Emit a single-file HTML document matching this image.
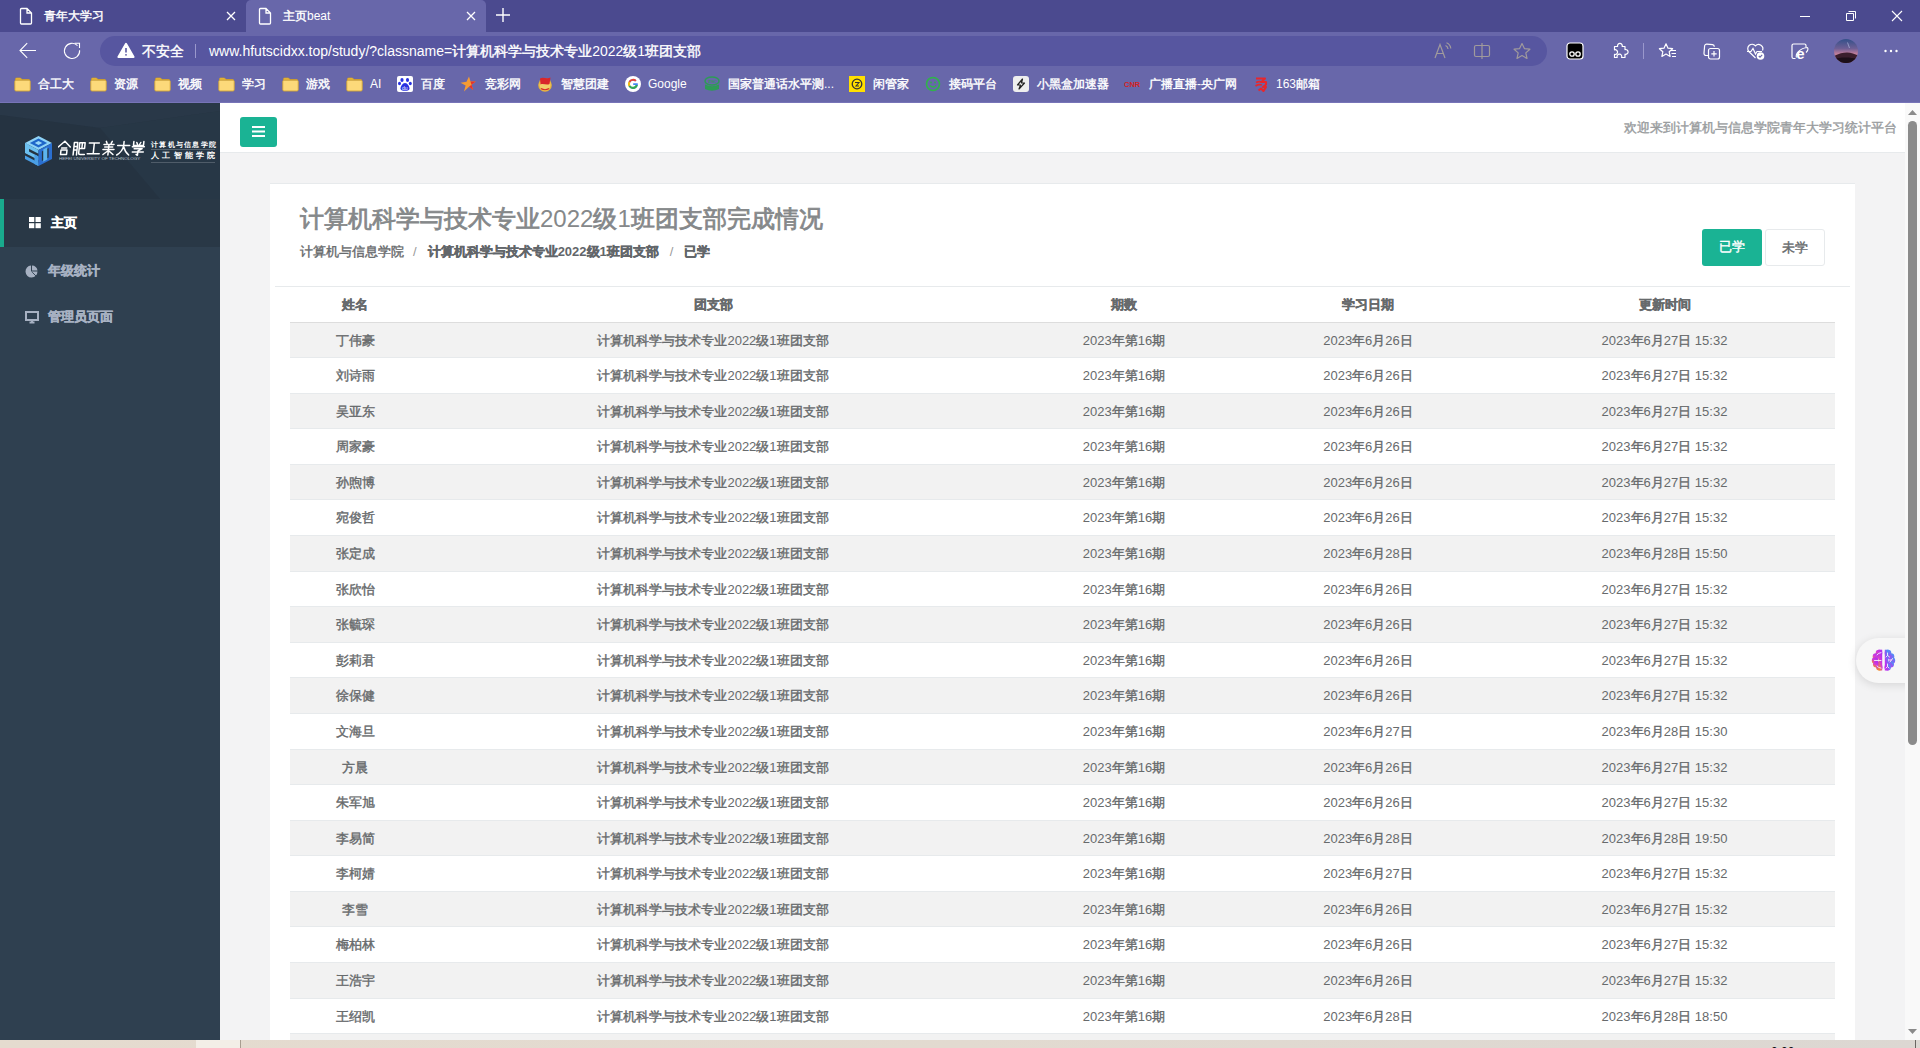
<!DOCTYPE html>
<html><head><meta charset="utf-8">
<style>
*{box-sizing:border-box;margin:0;padding:0}
html,body{width:1920px;height:1048px;overflow:hidden;background:#f3f3f4;font-family:"Liberation Sans",sans-serif;}
.abs{position:absolute}
i{font-style:normal;display:inline-block;width:1em;-webkit-text-stroke:0.4px currentColor}
#title i{-webkit-text-stroke:0.8px currentColor}
/* browser chrome */
#tabs{position:absolute;left:0;top:0;width:1920px;height:32px;background:#4b4a8f}
#tab1,#tab2{position:absolute;top:0;height:32px;color:#fff;font-size:12px}
#tab2{left:246px;width:240px;background:#6867aa;border-radius:5px 5px 0 0}
#tab1{left:0;width:246px}
.tabtxt{position:absolute;top:8px;line-height:16px;white-space:nowrap}
#toolbar{position:absolute;left:0;top:32px;width:1920px;height:71px;background:#6867aa}
#toolbar > svg{z-index:2}
#omni{position:absolute;left:100px;top:4px;width:1447px;height:30px;border-radius:15px;background:#5756a0}
#bmbar{position:absolute;left:0;top:36px;height:32px;width:1920px}
.bm{position:absolute;top:8px;color:#fff;font-size:12px;line-height:16px;white-space:nowrap}
.fold{position:absolute;top:9px;width:16px;height:13px;background:#f7d36b;border-radius:2px;border:1px solid #c9a033}
#chline{position:absolute;left:0;top:102px;width:1920px;height:1px;background:#7774b8}
/* page */
#side{position:absolute;left:0;top:103px;width:220px;height:937px;background:#2f4050}
#navhdr{position:absolute;left:0;top:0;width:220px;height:96px;background:#263545;overflow:hidden}
#nav1{position:absolute;left:0;top:96px;width:220px;height:48px;background:#293846;border-left:4px solid #19aa8d}
.navt{position:absolute;color:#a7b1c2;font-size:13px;font-weight:bold;line-height:18px;white-space:nowrap}
#hdr{position:absolute;left:220px;top:103px;width:1685px;height:50px;background:#fff;border-bottom:1px solid #e7eaec}
#menubtn{position:absolute;left:20px;top:14px;width:37px;height:30px;background:#1ab394;border-radius:3px}
#welcome{position:absolute;right:8px;top:16px;color:#999c9e;font-size:13px;line-height:18px;white-space:nowrap}
#scroll{position:absolute;left:1905px;top:103px;width:15px;height:937px;background:#f9f9f9}
#card{position:absolute;left:270px;top:183px;width:1585px;height:857px;background:#fff;border-top:1px solid #e7eaec}
#title{position:absolute;left:30px;top:17px;font-size:24px;font-weight:normal;color:#85888a;line-height:36px;white-space:nowrap}
#crumb{position:absolute;left:30px;top:59px;font-size:13px;color:#676a6c;line-height:18px;white-space:nowrap}
#crumb b{color:#62666a}
#crumb span.sep{color:#999;padding:0 11px 0 9px}
.btn{position:absolute;top:45px;height:37px;font-size:13px;line-height:35px;text-align:center;border-radius:3px}
#hline{position:absolute;left:5px;top:102px;width:1575px;height:1px;background:#e7eaec}
table{position:absolute;left:20px;top:103px;width:1545px;border-collapse:collapse;font-size:13px;color:#676a6c;table-layout:fixed}
th,td{padding:9px 8px 7px;line-height:18.5714px;text-align:center;white-space:nowrap;overflow:hidden}
th{font-weight:bold;border-bottom:1px solid #dddddd}
td{border-top:1px solid #e7eaec}
tbody tr:nth-child(odd){background:#f2f2f2}
#brain{position:absolute;left:1856px;top:638px;width:60px;height:45px;background:#f7f7f7;border-radius:22.5px 0 0 22.5px;box-shadow:0 2px 10px rgba(0,0,0,0.12)}
#bottom{overflow:hidden;position:absolute;left:0;top:1040px;width:1920px;height:8px;background:linear-gradient(90deg,#e5dbcf,#e2dad0 50%,#dcd7d2)}
</style></head><body>
<div id="tabs">
  <div id="tab1">
    <svg class="abs" style="left:19px;top:7px" width="14" height="18" viewBox="0 0 14 18"><path d="M2.5 1.5h5.5l4.5 4.5v10a1 1 0 0 1-1 1h-9a1 1 0 0 1-1-1v-13.5a1 1 0 0 1 1-1z M8 1.5v4.5h4.5" fill="none" stroke="#fff" stroke-width="1.3"/></svg>
    <div class="tabtxt" style="left:44px;top:8px;font-size:12px"><i>青</i><i>年</i><i>大</i><i>学</i><i>习</i></div>
    <svg class="abs" style="left:226px;top:11px" width="10" height="10" viewBox="0 0 10 10"><path d="M1 1L9 9M9 1L1 9" stroke="#fff" stroke-width="1.3"/></svg>
  </div>
  <div id="tab2">
    <svg class="abs" style="left:12px;top:7px" width="14" height="18" viewBox="0 0 14 18"><path d="M2.5 1.5h5.5l4.5 4.5v10a1 1 0 0 1-1 1h-9a1 1 0 0 1-1-1v-13.5a1 1 0 0 1 1-1z M8 1.5v4.5h4.5" fill="none" stroke="#fff" stroke-width="1.3"/></svg>
    <div class="tabtxt" style="left:37px;top:8px;font-size:12px"><i>主</i><i>页</i>beat</div>
    <svg class="abs" style="left:220px;top:11px" width="10" height="10" viewBox="0 0 10 10"><path d="M1 1L9 9M9 1L1 9" stroke="#fff" stroke-width="1.3"/></svg>
  </div>
  <svg class="abs" style="left:495px;top:7px" width="16" height="16" viewBox="0 0 16 16"><path d="M8 1V15M1 8H15" stroke="#fff" stroke-width="1.4"/></svg>
  <svg class="abs" style="left:1798px;top:10px" width="14" height="12" viewBox="0 0 14 12"><path d="M2 6.5H12" stroke="#fff" stroke-width="1"/></svg>
  <svg class="abs" style="left:1844px;top:9px" width="14" height="14" viewBox="0 0 14 14"><path d="M2.5 4.5h7v7h-7z" fill="none" stroke="#fff" stroke-width="1" rx="1"/><path d="M4.5 2.5h7v7" fill="none" stroke="#fff" stroke-width="1"/></svg>
  <svg class="abs" style="left:1890px;top:9px" width="14" height="14" viewBox="0 0 14 14"><path d="M2 2L12 12M12 2L2 12" stroke="#fff" stroke-width="1.1"/></svg>
</div>
<div id="toolbar">
  <svg class="abs" style="left:18px;top:10px" width="20" height="18" viewBox="0 0 20 18"><path d="M2.2 8.5H18M9.2 1.2L2 8.5L9.2 15.8" fill="none" stroke="#fff" stroke-width="1.1"/></svg>
  <svg class="abs" style="left:62px;top:10px" width="20" height="18" viewBox="0 0 20 18"><path d="M15.5 3.6A7.6 7.6 0 1 0 17.6 8.2" fill="none" stroke="#fff" stroke-width="1.1"/><path d="M12.6 1.2H17.5V6.1" fill="none" stroke="#fff" stroke-width="1.1"/></svg>
  <svg class="abs" style="left:1433px;top:10px" width="20" height="18" viewBox="0 0 20 18"><path d="M2 16L7 2.5L12 16M3.8 11.5H10.2" fill="none" stroke="#a09a9c" stroke-width="1.2"/><path d="M12.5 3.5A4 4 0 0 1 15 7M13.5 0.8A7 7 0 0 1 17.8 6.5" fill="none" stroke="#a09a9c" stroke-width="1.2"/></svg>
  <svg class="abs" style="left:1472px;top:10px" width="20" height="18" viewBox="0 0 20 18"><path d="M4 3.5h12a1.5 1.5 0 0 1 1.5 1.5v8a1.5 1.5 0 0 1-1.5 1.5h-12a1.5 1.5 0 0 1-1.5-1.5v-8a1.5 1.5 0 0 1 1.5-1.5zM10 1V17" fill="none" stroke="#a09a9c" stroke-width="1.2"/></svg>
  <svg class="abs" style="left:1512px;top:10px" width="20" height="18" viewBox="0 0 20 18"><path d="M10 1.5L12.4 6.6L17.9 7.2L13.8 10.9L15 16.4L10 13.6L5 16.4L6.2 10.9L2.1 7.2L7.6 6.6Z" fill="none" stroke="#a09a9c" stroke-width="1.2" stroke-linejoin="round"/></svg>
  <svg class="abs" style="left:1566px;top:10px" width="18" height="18" viewBox="0 0 18 18"><rect x="1" y="1" width="16" height="16" rx="3" fill="#000" stroke="#fff" stroke-width="1.2"/><circle cx="6" cy="12" r="2.2" fill="none" stroke="#fff" stroke-width="1.3"/><circle cx="12" cy="12" r="2.2" fill="none" stroke="#fff" stroke-width="1.3"/></svg>
  <svg class="abs" style="left:1610px;top:10px" width="20" height="18" viewBox="0 0 20 18"><path d="M4.5 4.5H7.6A2.4 2.4 0 1 1 12.2 4.5H15V7.6A2.4 2.4 0 1 1 15 12.2V15.5H11.6A2.4 2.4 0 1 0 7.2 15.5H4.5V12.4A2.4 2.4 0 1 0 4.5 7.8Z" fill="none" stroke="#fff" stroke-width="1.2" stroke-linejoin="round"/></svg>
  <div class="abs" style="left:1643px;top:11px;width:1px;height:16px;background:#9a98cc"></div>
  <svg class="abs" style="left:1658px;top:10px" width="20" height="18" viewBox="0 0 20 18"><path d="M8 1.8L10 6.2L14.6 6.7L11.2 9.8L12.1 14.4L8 12.1L3.9 14.4L4.8 9.8L1.4 6.7L6 6.2Z" fill="none" stroke="#fff" stroke-width="1.2" stroke-linejoin="round"/><path d="M12.5 8.5H18M13.5 11.5H18M14 14.5H18" stroke="#fff" stroke-width="1.2"/></svg>
  <svg class="abs" style="left:1702px;top:10px" width="20" height="18" viewBox="0 0 20 18"><path d="M6 13.5H4a2 2 0 0 1-2-2.2L2.6 4a2 2 0 0 1 2.2-1.8L10.5 2.7a2 2 0 0 1 1.8 2" fill="none" stroke="#fff" stroke-width="1.2"/><rect x="6.5" y="6.5" width="11" height="10.5" rx="2" fill="none" stroke="#fff" stroke-width="1.2"/><path d="M12 9V14.5M9.3 11.8H14.7" stroke="#fff" stroke-width="1.2"/></svg>
  <svg class="abs" style="left:1746px;top:10px" width="20" height="18" viewBox="0 0 20 18"><path d="M9.5 16L2.8 9.5A4.3 4.3 0 0 1 9.5 3.8A4.3 4.3 0 0 1 16.5 8.5" fill="none" stroke="#fff" stroke-width="1.2"/><path d="M1 9.5H5L7 6.5L9.5 12L11 9.5H16" fill="none" stroke="#fff" stroke-width="1.2"/><circle cx="14.5" cy="14" r="3.8" fill="#fff"/><path d="M12.8 14L14 15.2L16.2 12.8" fill="none" stroke="#6867aa" stroke-width="1.1"/></svg>
  <svg class="abs" style="left:1790px;top:10px" width="20" height="18" viewBox="0 0 20 18"><path d="M5.5 16.5H3.5a1.5 1.5 0 0 1-1.5-1.5V3.5A1.5 1.5 0 0 1 3.5 2h11A1.5 1.5 0 0 1 16 3.5V5.5" fill="none" stroke="#fff" stroke-width="1.2"/><text x="6.2" y="16.8" font-family="Liberation Sans" font-weight="bold" font-size="15" fill="#fff">e</text><path d="M6.5 15.5C5 12 10 6 17.5 5.5M17.5 5.5C18.5 7 17 9.5 16 10.5" fill="none" stroke="#fff" stroke-width="1.1"/></svg>
  <svg class="abs" style="left:1834px;top:7px" width="24" height="24" viewBox="0 0 24 24"><defs><linearGradient id="av" x1="0" y1="0" x2="0" y2="1"><stop offset="0" stop-color="#33508a"/><stop offset="0.4" stop-color="#6f5f95"/><stop offset="0.62" stop-color="#c07e9a"/><stop offset="1" stop-color="#c07e9a"/></linearGradient><clipPath id="avc"><circle cx="12" cy="12" r="12"/></clipPath></defs><g clip-path="url(#avc)"><rect width="24" height="24" fill="url(#av)"/><path d="M0 17C5 14.5 9 13.5 13 13.5C17 13.5 21 15 24 16.5V24H0Z" fill="#3a1e2c"/><path d="M0 20C6 18 16 18 24 20V24H0Z" fill="#1c0f18"/><path d="M13.5 3.5L15.5 9" stroke="#b9c8e8" stroke-width="0.6"/></g></svg>
  <svg class="abs" style="left:1882px;top:15px" width="18" height="8" viewBox="0 0 18 8"><circle cx="3.5" cy="4" r="1.2" fill="#fff"/><circle cx="9" cy="4" r="1.2" fill="#fff"/><circle cx="14.5" cy="4" r="1.2" fill="#fff"/></svg>
  <div id="omni">
    <svg class="abs" style="left:17px;top:6px" width="18" height="17" viewBox="0 0 18 17"><path d="M9 1.8L16.6 15H1.4Z" fill="#fff" stroke="#fff" stroke-width="2" stroke-linejoin="round"/><path d="M9 6V10.6" stroke="#5756a0" stroke-width="1.6"/><circle cx="9" cy="12.8" r="0.9" fill="#5756a0"/></svg>
    <div class="abs" style="left:42px;top:7px;color:#fff;font-size:14px;line-height:16px"><i>不</i><i>安</i><i>全</i></div>
    <div class="abs" style="left:95px;top:8px;width:1px;height:14px;background:#9a98cc"></div>
    <div class="abs" style="left:109px;top:7px;color:#fff;font-size:14px;line-height:17px;white-space:nowrap">www.hfutscidxx.top/study/?classname=<i>计</i><i>算</i><i>机</i><i>科</i><i>学</i><i>与</i><i>技</i><i>术</i><i>专</i><i>业</i>2022<i>级</i>1<i>班</i><i>团</i><i>支</i><i>部</i></div>
  </div>
  <div id="bmbar">
<svg class="abs" style="left:14px;top:9px" width="17" height="15" viewBox="0 0 17 15"><path d="M1.5 3V2a1 1 0 0 1 1-1h4l1.5 1.5h6.5a1 1 0 0 1 1 1V3Z" fill="#f5c242" stroke="#c99a2a" stroke-width="0.8"/><rect x="0.8" y="3.2" width="15.4" height="10.8" rx="1.2" fill="#fcd97a" stroke="#d4a634" stroke-width="0.9"/></svg>
<div class="bm" style="left:38px"><i>合</i><i>工</i><i>大</i></div>
<svg class="abs" style="left:90px;top:9px" width="17" height="15" viewBox="0 0 17 15"><path d="M1.5 3V2a1 1 0 0 1 1-1h4l1.5 1.5h6.5a1 1 0 0 1 1 1V3Z" fill="#f5c242" stroke="#c99a2a" stroke-width="0.8"/><rect x="0.8" y="3.2" width="15.4" height="10.8" rx="1.2" fill="#fcd97a" stroke="#d4a634" stroke-width="0.9"/></svg>
<div class="bm" style="left:114px"><i>资</i><i>源</i></div>
<svg class="abs" style="left:154px;top:9px" width="17" height="15" viewBox="0 0 17 15"><path d="M1.5 3V2a1 1 0 0 1 1-1h4l1.5 1.5h6.5a1 1 0 0 1 1 1V3Z" fill="#f5c242" stroke="#c99a2a" stroke-width="0.8"/><rect x="0.8" y="3.2" width="15.4" height="10.8" rx="1.2" fill="#fcd97a" stroke="#d4a634" stroke-width="0.9"/></svg>
<div class="bm" style="left:178px"><i>视</i><i>频</i></div>
<svg class="abs" style="left:218px;top:9px" width="17" height="15" viewBox="0 0 17 15"><path d="M1.5 3V2a1 1 0 0 1 1-1h4l1.5 1.5h6.5a1 1 0 0 1 1 1V3Z" fill="#f5c242" stroke="#c99a2a" stroke-width="0.8"/><rect x="0.8" y="3.2" width="15.4" height="10.8" rx="1.2" fill="#fcd97a" stroke="#d4a634" stroke-width="0.9"/></svg>
<div class="bm" style="left:242px"><i>学</i><i>习</i></div>
<svg class="abs" style="left:282px;top:9px" width="17" height="15" viewBox="0 0 17 15"><path d="M1.5 3V2a1 1 0 0 1 1-1h4l1.5 1.5h6.5a1 1 0 0 1 1 1V3Z" fill="#f5c242" stroke="#c99a2a" stroke-width="0.8"/><rect x="0.8" y="3.2" width="15.4" height="10.8" rx="1.2" fill="#fcd97a" stroke="#d4a634" stroke-width="0.9"/></svg>
<div class="bm" style="left:306px"><i>游</i><i>戏</i></div>
<svg class="abs" style="left:346px;top:9px" width="17" height="15" viewBox="0 0 17 15"><path d="M1.5 3V2a1 1 0 0 1 1-1h4l1.5 1.5h6.5a1 1 0 0 1 1 1V3Z" fill="#f5c242" stroke="#c99a2a" stroke-width="0.8"/><rect x="0.8" y="3.2" width="15.4" height="10.8" rx="1.2" fill="#fcd97a" stroke="#d4a634" stroke-width="0.9"/></svg>
<div class="bm" style="left:370px">AI</div>
<svg class="abs" style="left:397px;top:8px" width="16" height="16" viewBox="0 0 16 16"><rect x="0" y="0" width="16" height="16" rx="2" fill="#fff"/><ellipse cx="5" cy="4" rx="1.6" ry="2" fill="#2932e1"/><ellipse cx="10.5" cy="4" rx="1.6" ry="2" fill="#2932e1"/><ellipse cx="2.5" cy="7.5" rx="1.5" ry="1.8" fill="#2932e1"/><ellipse cx="13.3" cy="7.5" rx="1.5" ry="1.8" fill="#2932e1"/><path d="M8 7C5.5 7 3.5 10.5 3.5 12.5C3.5 14.3 5 14.8 8 14.8C11 14.8 12.5 14.3 12.5 12.5C12.5 10.5 10.5 7 8 7Z" fill="#2932e1"/><text x="5" y="13.8" font-size="5" font-family="Liberation Sans" fill="#fff">du</text></svg>
<div class="bm" style="left:421px"><i>百</i><i>度</i></div>
<svg class="abs" style="left:460px;top:8px" width="16" height="16" viewBox="0 0 16 16"><path d="M9 0.5L10.5 5.5L15.8 5.6L11.5 8.8L13.2 14L9 10.8L4 15.5L5.6 9.5L0.5 6.8L6.5 5.8Z" fill="#f59b34"/><path d="M11.5 8.8L13.2 14L9 10.8Z" fill="#e6312c"/><path d="M10.5 5.5L15.8 5.6L11.5 8.8Z" fill="#e6312c"/></svg>
<div class="bm" style="left:485px"><i>竞</i><i>彩</i><i>网</i></div>
<svg class="abs" style="left:537px;top:8px" width="16" height="16" viewBox="0 0 16 16"><circle cx="8" cy="9" r="6.8" fill="#e8b43a"/><circle cx="8" cy="9" r="5.5" fill="#f2cf6a"/><path d="M3 2.5C6 0.5 10 3.5 13.5 1.5L12.5 8C9.5 9.5 6 7 3.5 8.5Z" fill="#d9262b"/><path d="M4 12.5Q8 15 12 12.5" fill="none" stroke="#d9262b" stroke-width="1.2"/></svg>
<div class="bm" style="left:561px"><i>智</i><i>慧</i><i>团</i><i>建</i></div>
<svg class="abs" style="left:625px;top:8px" width="16" height="16" viewBox="0 0 16 16"><circle cx="8" cy="8" r="8" fill="#fff"/><path d="M12.6 7.2H8.2V9H10.8C10.5 10.4 9.4 11.2 8.2 11.2A3.2 3.2 0 0 1 8.2 4.8C9 4.8 9.7 5.1 10.2 5.6L11.5 4.3A5 5 0 1 0 8.2 13C11 13 12.9 11 12.9 8.1Z" fill="#4285f4"/><path d="M3.6 5.5A5 5 0 0 1 11.5 4.3L10.2 5.6A3.2 3.2 0 0 0 5.2 6.6Z" fill="#ea4335"/><path d="M3.6 5.5L5.2 6.6A3.2 3.2 0 0 0 5.2 9.4L3.6 10.6A5 5 0 0 1 3.6 5.5Z" fill="#fbbc05"/><path d="M3.6 10.6L5.2 9.4A3.2 3.2 0 0 0 10.8 9H12.8C12.5 11.3 10.6 13 8.2 13A5 5 0 0 1 3.6 10.6Z" fill="#34a853"/></svg>
<div class="bm" style="left:648px">Google</div>
<svg class="abs" style="left:704px;top:8px" width="16" height="16" viewBox="0 0 16 16"><ellipse cx="8" cy="5" rx="7" ry="4" fill="none" stroke="#2e9b57" stroke-width="1.5"/><text x="4.3" y="6.6" font-size="4.5" font-weight="bold" font-family="Liberation Serif" fill="#2e9b57">PSC</text><path d="M1 8.5Q8 12 15 8.5V13Q8 16.5 1 13Z" fill="#2e9b57"/></svg>
<div class="bm" style="left:728px"><i>国</i><i>家</i><i>普</i><i>通</i><i>话</i><i>水</i><i>平</i><i>测</i>...</div>
<svg class="abs" style="left:849px;top:8px" width="16" height="16" viewBox="0 0 16 16"><rect x="0" y="0" width="16" height="16" fill="#ffdf00"/><circle cx="8" cy="8" r="4.8" fill="none" stroke="#333" stroke-width="1.3"/><path d="M6 6.5H10L7 10H10" fill="none" stroke="#333" stroke-width="1.1"/></svg>
<div class="bm" style="left:873px"><i>闲</i><i>管</i><i>家</i></div>
<svg class="abs" style="left:925px;top:8px" width="16" height="16" viewBox="0 0 16 16"><circle cx="8" cy="8" r="6.5" fill="none" stroke="#2fb44a" stroke-width="1.6"/><circle cx="6" cy="6.5" r="0.9" fill="#2fb44a"/><circle cx="10" cy="6.5" r="0.9" fill="#2fb44a"/><path d="M5 9.5Q8 12.5 11 9.5" fill="none" stroke="#2fb44a" stroke-width="1.3"/></svg>
<div class="bm" style="left:949px"><i>接</i><i>码</i><i>平</i><i>台</i></div>
<svg class="abs" style="left:1013px;top:8px" width="16" height="16" viewBox="0 0 16 16"><rect x="0" y="0" width="16" height="16" rx="3" fill="#eeeeee"/><path d="M9.5 3L4.5 9H7.5L6 13L11.5 7H8.5Z" fill="none" stroke="#222" stroke-width="1.2" stroke-linejoin="round"/></svg>
<div class="bm" style="left:1037px"><i>小</i><i>黑</i><i>盒</i><i>加</i><i>速</i><i>器</i></div>
<svg class="abs" style="left:1124px;top:8px" width="16" height="16" viewBox="0 0 16 16"><text x="0" y="11" font-size="7.5" font-weight="bold" font-family="Liberation Sans" fill="#d42222">CNR</text></svg>
<div class="bm" style="left:1149px"><i>广</i><i>播</i><i>直</i><i>播</i>-<i>央</i><i>广</i><i>网</i></div>
<svg class="abs" style="left:1253px;top:8px" width="16" height="16" viewBox="0 0 16 16"><path d="M3 2.5H12L8.5 6H13V8.5L10 11H13L10.5 15L8 12.5L5.5 14.5" fill="none" stroke="#e8262c" stroke-width="2.1" stroke-linejoin="round"/><path d="M3 6.5Q6 5 8.5 6M2.5 10Q5.5 8 9 9" fill="none" stroke="#e8262c" stroke-width="1.8"/></svg>
<div class="bm" style="left:1276px">163<i>邮</i><i>箱</i></div>
  </div>
</div>
<div id="chline"></div>

<div id="side">
  <div id="navhdr">
    <svg class="abs" style="left:0;top:0" width="220" height="96" viewBox="0 0 220 96"><polygon points="0,0 220,0 220,8 100,25 0,12" fill="#2a3948" opacity="0.8"/><polygon points="100,25 220,8 220,96 160,96" fill="#283746" opacity="0.9"/><polygon points="0,12 100,25 160,96 0,96" fill="#24323f" opacity="0.6"/></svg>
    <svg class="abs" style="left:25px;top:33px" width="28" height="31" viewBox="0 0 28 31">
      <g transform="matrix(13.5,-7,13.5,7,0,7)"><rect width="1" height="1" fill="#8fd3f7"/><rect x="0.18" y="0.18" width="0.64" height="0.64" fill="#1e66c9"/><rect x="0.36" y="0.36" width="0.28" height="0.28" fill="#9ad8f8"/></g>
      <g transform="matrix(13.5,7,0,16,0,7)"><rect width="1" height="0.24" fill="#6cc0f0"/><rect width="0.3" height="0.6" fill="#6cc0f0"/><rect y="0.4" width="1" height="0.22" fill="#6cc0f0"/><rect x="0.7" y="0.4" width="0.3" height="0.6" fill="#4a9fe6"/><rect y="0.78" width="1" height="0.22" fill="#4a9fe6"/></g>
      <g transform="matrix(13.5,-7,0,16,13.5,14)"><rect width="1" height="1" fill="#2a6fd0"/><rect x="0.25" y="0.2" width="0.5" height="0.6" fill="#243444"/><rect x="0.35" y="0.12" width="0.3" height="0.76" fill="#5db5ee"/></g>
    </svg>
    <svg class="abs" style="left:58px;top:37px" width="88" height="17" viewBox="0 0 88 17"><path transform="translate(0.0,0.5) skewX(-6)" d="M7 0.8L1 6.5M7 0.8L13 6.5M4.5 7.5H9.5M4 9.5H10V14H4Z" fill="none" stroke="#fff" stroke-width="1.5" stroke-linecap="round" stroke-linejoin="round"/><path transform="translate(14.8,0.5) skewX(-6)" d="M1.8 2V14.5M1.8 2H5.2V14.5M1.8 6H5.2M1.8 9.5H5.2M7.2 2.2H12.6V8H7.2ZM9.9 2.2V8M7.2 8V12.8Q7.2 14 8.8 14H13" fill="none" stroke="#fff" stroke-width="1.5" stroke-linecap="round" stroke-linejoin="round"/><path transform="translate(29.6,0.5) skewX(-6)" d="M2 2.5H12M7 2.5V13M1 13.2H13" fill="none" stroke="#fff" stroke-width="1.5" stroke-linecap="round" stroke-linejoin="round"/><path transform="translate(44.4,0.5) skewX(-6)" d="M4 0.8L5 2.8M10 0.8L9 2.8M2 4H12M3 6.5H11M1.5 9H12.5M7 4V14.5M7 10L2 14M7 10L12 14" fill="none" stroke="#fff" stroke-width="1.5" stroke-linecap="round" stroke-linejoin="round"/><path transform="translate(59.2,0.5) skewX(-6)" d="M1 5H13M7 1V5Q6.5 11 1 14.5M7 6Q9 11.5 13 14.5" fill="none" stroke="#fff" stroke-width="1.5" stroke-linecap="round" stroke-linejoin="round"/><path transform="translate(74.0,0.5) skewX(-6)" d="M2 1V5H12V1M5 2L6 4M9 2L8 4M1 6.2H13M3 8.2H11L7 10.5M7 10.5V14.8L5.5 13.8M1.5 11.5H12.5" fill="none" stroke="#fff" stroke-width="1.5" stroke-linecap="round" stroke-linejoin="round"/></svg>
    <div class="abs" style="left:59px;top:54px;color:#b8c0cc;font-size:4px;line-height:4px;white-space:nowrap;transform:scaleX(1.12);transform-origin:0 0">HEFEI UNIVERSITY OF TECHNOLOGY</div>
    <div class="abs nocjk" style="left:151px;top:38px;color:#fff;font-size:7px;line-height:8px;letter-spacing:1.3px;white-space:nowrap;font-weight:bold">计算机与信息学院</div>
    <div class="abs" style="left:151px;top:46px;width:64px;height:1px;background:#56636f"></div>
    <div class="abs nocjk" style="left:151px;top:48px;color:#fff;font-size:8px;line-height:10px;white-space:nowrap;font-weight:bold;letter-spacing:3.3px">人工智能学院</div>
    <div class="abs" style="left:151px;top:59px;width:64px;height:1px;background:#4f5c69"></div>
  </div>
  <div id="nav1">
    <svg class="abs" style="left:25px;top:18px" width="12" height="12" viewBox="0 0 12 12"><rect x="0" y="0" width="5.3" height="5" fill="#fff"/><rect x="6.5" y="0" width="5.3" height="5" fill="#fff"/><rect x="0" y="6.2" width="5.3" height="5" fill="#fff"/><rect x="6.5" y="6.2" width="5.3" height="5" fill="#fff"/></svg>
    <div class="navt" style="left:47px;top:15px;color:#fff"><i>主</i><i>页</i></div>
  </div>
  <svg class="abs" style="left:25px;top:162px" width="13" height="13" viewBox="0 0 13 13"><path d="M6 0.5A6 6 0 1 0 12.5 6.5H6Z" fill="#a7b1c2"/><path d="M7 0.5A5.5 5.5 0 0 1 12.5 5.5H7Z" fill="#a7b1c2"/><path d="M7.2 7.2L11 11" stroke="#2f4050" stroke-width="0.9"/></svg>
  <div class="navt" style="left:48px;top:159px"><i>年</i><i>级</i><i>统</i><i>计</i></div>
  <svg class="abs" style="left:25px;top:208px" width="14" height="13" viewBox="0 0 14 13"><path d="M1 1H13V9H1Z" fill="none" stroke="#a7b1c2" stroke-width="2"/><path d="M4.5 11.5H9.5" stroke="#a7b1c2" stroke-width="2"/><path d="M7 9V11" stroke="#a7b1c2" stroke-width="2"/></svg>
  <div class="navt" style="left:48px;top:205px"><i>管</i><i>理</i><i>员</i><i>页</i><i>面</i></div>
</div>
<div id="hdr">
  <div id="menubtn"><svg class="abs" style="left:12px;top:8px" width="13" height="13" viewBox="0 0 13 13"><path d="M0.5 2H12.5M0.5 6.5H12.5M0.5 11H12.5" stroke="#fff" stroke-width="2.2" stroke-linecap="round"/></svg></div>
  <div id="welcome"><i>欢</i><i>迎</i><i>来</i><i>到</i><i>计</i><i>算</i><i>机</i><i>与</i><i>信</i><i>息</i><i>学</i><i>院</i><i>青</i><i>年</i><i>大</i><i>学</i><i>习</i><i>统</i><i>计</i><i>平</i><i>台</i></div>
</div>
<div id="card">
  <div id="title"><i>计</i><i>算</i><i>机</i><i>科</i><i>学</i><i>与</i><i>技</i><i>术</i><i>专</i><i>业</i>2022<i>级</i>1<i>班</i><i>团</i><i>支</i><i>部</i><i>完</i><i>成</i><i>情</i><i>况</i></div>
  <div id="crumb"><i>计</i><i>算</i><i>机</i><i>与</i><i>信</i><i>息</i><i>学</i><i>院</i><span class="sep">/</span><b><i>计</i><i>算</i><i>机</i><i>科</i><i>学</i><i>与</i><i>技</i><i>术</i><i>专</i><i>业</i>2022<i>级</i>1<i>班</i><i>团</i><i>支</i><i>部</i></b><span class="sep" style="padding-left:11px">/</span><b><i>已</i><i>学</i></b></div>
  <div class="btn" style="left:1432px;width:60px;background:#1ab394;color:#fff"><i>已</i><i>学</i></div>
  <div class="btn" style="left:1495px;width:60px;background:#fff;border:1px solid #e7eaec;color:#676a6c"><i>未</i><i>学</i></div>
  <div id="hline"></div>
  <table>
    <colgroup><col style="width:130px"><col style="width:586px"><col style="width:236px"><col style="width:252px"><col style="width:341px"></colgroup>
    <thead><tr><th><i>姓</i><i>名</i></th><th><i>团</i><i>支</i><i>部</i></th><th><i>期</i><i>数</i></th><th><i>学</i><i>习</i><i>日</i><i>期</i></th><th><i>更</i><i>新</i><i>时</i><i>间</i></th></tr></thead>
    <tbody>
<tr><td><i>丁</i><i>伟</i><i>豪</i></td><td><i>计</i><i>算</i><i>机</i><i>科</i><i>学</i><i>与</i><i>技</i><i>术</i><i>专</i><i>业</i>2022<i>级</i>1<i>班</i><i>团</i><i>支</i><i>部</i></td><td>2023<i>年</i><i>第</i>16<i>期</i></td><td>2023<i>年</i>6<i>月</i>26<i>日</i></td><td>2023<i>年</i>6<i>月</i>27<i>日</i> 15:32</td></tr>
<tr><td><i>刘</i><i>诗</i><i>雨</i></td><td><i>计</i><i>算</i><i>机</i><i>科</i><i>学</i><i>与</i><i>技</i><i>术</i><i>专</i><i>业</i>2022<i>级</i>1<i>班</i><i>团</i><i>支</i><i>部</i></td><td>2023<i>年</i><i>第</i>16<i>期</i></td><td>2023<i>年</i>6<i>月</i>26<i>日</i></td><td>2023<i>年</i>6<i>月</i>27<i>日</i> 15:32</td></tr>
<tr><td><i>吴</i><i>亚</i><i>东</i></td><td><i>计</i><i>算</i><i>机</i><i>科</i><i>学</i><i>与</i><i>技</i><i>术</i><i>专</i><i>业</i>2022<i>级</i>1<i>班</i><i>团</i><i>支</i><i>部</i></td><td>2023<i>年</i><i>第</i>16<i>期</i></td><td>2023<i>年</i>6<i>月</i>26<i>日</i></td><td>2023<i>年</i>6<i>月</i>27<i>日</i> 15:32</td></tr>
<tr><td><i>周</i><i>家</i><i>豪</i></td><td><i>计</i><i>算</i><i>机</i><i>科</i><i>学</i><i>与</i><i>技</i><i>术</i><i>专</i><i>业</i>2022<i>级</i>1<i>班</i><i>团</i><i>支</i><i>部</i></td><td>2023<i>年</i><i>第</i>16<i>期</i></td><td>2023<i>年</i>6<i>月</i>26<i>日</i></td><td>2023<i>年</i>6<i>月</i>27<i>日</i> 15:32</td></tr>
<tr><td><i>孙</i><i>煦</i><i>博</i></td><td><i>计</i><i>算</i><i>机</i><i>科</i><i>学</i><i>与</i><i>技</i><i>术</i><i>专</i><i>业</i>2022<i>级</i>1<i>班</i><i>团</i><i>支</i><i>部</i></td><td>2023<i>年</i><i>第</i>16<i>期</i></td><td>2023<i>年</i>6<i>月</i>26<i>日</i></td><td>2023<i>年</i>6<i>月</i>27<i>日</i> 15:32</td></tr>
<tr><td><i>宛</i><i>俊</i><i>哲</i></td><td><i>计</i><i>算</i><i>机</i><i>科</i><i>学</i><i>与</i><i>技</i><i>术</i><i>专</i><i>业</i>2022<i>级</i>1<i>班</i><i>团</i><i>支</i><i>部</i></td><td>2023<i>年</i><i>第</i>16<i>期</i></td><td>2023<i>年</i>6<i>月</i>26<i>日</i></td><td>2023<i>年</i>6<i>月</i>27<i>日</i> 15:32</td></tr>
<tr><td><i>张</i><i>定</i><i>成</i></td><td><i>计</i><i>算</i><i>机</i><i>科</i><i>学</i><i>与</i><i>技</i><i>术</i><i>专</i><i>业</i>2022<i>级</i>1<i>班</i><i>团</i><i>支</i><i>部</i></td><td>2023<i>年</i><i>第</i>16<i>期</i></td><td>2023<i>年</i>6<i>月</i>28<i>日</i></td><td>2023<i>年</i>6<i>月</i>28<i>日</i> 15:50</td></tr>
<tr><td><i>张</i><i>欣</i><i>怡</i></td><td><i>计</i><i>算</i><i>机</i><i>科</i><i>学</i><i>与</i><i>技</i><i>术</i><i>专</i><i>业</i>2022<i>级</i>1<i>班</i><i>团</i><i>支</i><i>部</i></td><td>2023<i>年</i><i>第</i>16<i>期</i></td><td>2023<i>年</i>6<i>月</i>26<i>日</i></td><td>2023<i>年</i>6<i>月</i>27<i>日</i> 15:32</td></tr>
<tr><td><i>张</i><i>毓</i><i>琛</i></td><td><i>计</i><i>算</i><i>机</i><i>科</i><i>学</i><i>与</i><i>技</i><i>术</i><i>专</i><i>业</i>2022<i>级</i>1<i>班</i><i>团</i><i>支</i><i>部</i></td><td>2023<i>年</i><i>第</i>16<i>期</i></td><td>2023<i>年</i>6<i>月</i>26<i>日</i></td><td>2023<i>年</i>6<i>月</i>27<i>日</i> 15:32</td></tr>
<tr><td><i>彭</i><i>莉</i><i>君</i></td><td><i>计</i><i>算</i><i>机</i><i>科</i><i>学</i><i>与</i><i>技</i><i>术</i><i>专</i><i>业</i>2022<i>级</i>1<i>班</i><i>团</i><i>支</i><i>部</i></td><td>2023<i>年</i><i>第</i>16<i>期</i></td><td>2023<i>年</i>6<i>月</i>26<i>日</i></td><td>2023<i>年</i>6<i>月</i>27<i>日</i> 15:32</td></tr>
<tr><td><i>徐</i><i>保</i><i>健</i></td><td><i>计</i><i>算</i><i>机</i><i>科</i><i>学</i><i>与</i><i>技</i><i>术</i><i>专</i><i>业</i>2022<i>级</i>1<i>班</i><i>团</i><i>支</i><i>部</i></td><td>2023<i>年</i><i>第</i>16<i>期</i></td><td>2023<i>年</i>6<i>月</i>26<i>日</i></td><td>2023<i>年</i>6<i>月</i>27<i>日</i> 15:32</td></tr>
<tr><td><i>文</i><i>海</i><i>旦</i></td><td><i>计</i><i>算</i><i>机</i><i>科</i><i>学</i><i>与</i><i>技</i><i>术</i><i>专</i><i>业</i>2022<i>级</i>1<i>班</i><i>团</i><i>支</i><i>部</i></td><td>2023<i>年</i><i>第</i>16<i>期</i></td><td>2023<i>年</i>6<i>月</i>27<i>日</i></td><td>2023<i>年</i>6<i>月</i>28<i>日</i> 15:30</td></tr>
<tr><td><i>方</i><i>晨</i></td><td><i>计</i><i>算</i><i>机</i><i>科</i><i>学</i><i>与</i><i>技</i><i>术</i><i>专</i><i>业</i>2022<i>级</i>1<i>班</i><i>团</i><i>支</i><i>部</i></td><td>2023<i>年</i><i>第</i>16<i>期</i></td><td>2023<i>年</i>6<i>月</i>26<i>日</i></td><td>2023<i>年</i>6<i>月</i>27<i>日</i> 15:32</td></tr>
<tr><td><i>朱</i><i>军</i><i>旭</i></td><td><i>计</i><i>算</i><i>机</i><i>科</i><i>学</i><i>与</i><i>技</i><i>术</i><i>专</i><i>业</i>2022<i>级</i>1<i>班</i><i>团</i><i>支</i><i>部</i></td><td>2023<i>年</i><i>第</i>16<i>期</i></td><td>2023<i>年</i>6<i>月</i>26<i>日</i></td><td>2023<i>年</i>6<i>月</i>27<i>日</i> 15:32</td></tr>
<tr><td><i>李</i><i>易</i><i>简</i></td><td><i>计</i><i>算</i><i>机</i><i>科</i><i>学</i><i>与</i><i>技</i><i>术</i><i>专</i><i>业</i>2022<i>级</i>1<i>班</i><i>团</i><i>支</i><i>部</i></td><td>2023<i>年</i><i>第</i>16<i>期</i></td><td>2023<i>年</i>6<i>月</i>28<i>日</i></td><td>2023<i>年</i>6<i>月</i>28<i>日</i> 19:50</td></tr>
<tr><td><i>李</i><i>柯</i><i>婧</i></td><td><i>计</i><i>算</i><i>机</i><i>科</i><i>学</i><i>与</i><i>技</i><i>术</i><i>专</i><i>业</i>2022<i>级</i>1<i>班</i><i>团</i><i>支</i><i>部</i></td><td>2023<i>年</i><i>第</i>16<i>期</i></td><td>2023<i>年</i>6<i>月</i>27<i>日</i></td><td>2023<i>年</i>6<i>月</i>27<i>日</i> 15:32</td></tr>
<tr><td><i>李</i><i>雪</i></td><td><i>计</i><i>算</i><i>机</i><i>科</i><i>学</i><i>与</i><i>技</i><i>术</i><i>专</i><i>业</i>2022<i>级</i>1<i>班</i><i>团</i><i>支</i><i>部</i></td><td>2023<i>年</i><i>第</i>16<i>期</i></td><td>2023<i>年</i>6<i>月</i>26<i>日</i></td><td>2023<i>年</i>6<i>月</i>27<i>日</i> 15:32</td></tr>
<tr><td><i>梅</i><i>柏</i><i>林</i></td><td><i>计</i><i>算</i><i>机</i><i>科</i><i>学</i><i>与</i><i>技</i><i>术</i><i>专</i><i>业</i>2022<i>级</i>1<i>班</i><i>团</i><i>支</i><i>部</i></td><td>2023<i>年</i><i>第</i>16<i>期</i></td><td>2023<i>年</i>6<i>月</i>26<i>日</i></td><td>2023<i>年</i>6<i>月</i>27<i>日</i> 15:32</td></tr>
<tr><td><i>王</i><i>浩</i><i>宇</i></td><td><i>计</i><i>算</i><i>机</i><i>科</i><i>学</i><i>与</i><i>技</i><i>术</i><i>专</i><i>业</i>2022<i>级</i>1<i>班</i><i>团</i><i>支</i><i>部</i></td><td>2023<i>年</i><i>第</i>16<i>期</i></td><td>2023<i>年</i>6<i>月</i>26<i>日</i></td><td>2023<i>年</i>6<i>月</i>27<i>日</i> 15:32</td></tr>
<tr><td><i>王</i><i>绍</i><i>凯</i></td><td><i>计</i><i>算</i><i>机</i><i>科</i><i>学</i><i>与</i><i>技</i><i>术</i><i>专</i><i>业</i>2022<i>级</i>1<i>班</i><i>团</i><i>支</i><i>部</i></td><td>2023<i>年</i><i>第</i>16<i>期</i></td><td>2023<i>年</i>6<i>月</i>28<i>日</i></td><td>2023<i>年</i>6<i>月</i>28<i>日</i> 18:50</td></tr>
<tr><td><i>王</i><i>雨</i></td><td><i>计</i><i>算</i><i>机</i><i>科</i><i>学</i><i>与</i><i>技</i><i>术</i><i>专</i><i>业</i>2022<i>级</i>1<i>班</i><i>团</i><i>支</i><i>部</i></td><td>2023<i>年</i><i>第</i>16<i>期</i></td><td>2023<i>年</i>6<i>月</i>26<i>日</i></td><td>2023<i>年</i>6<i>月</i>27<i>日</i> 15:32</td></tr>
    </tbody>
  </table>
</div>
<div id="brain"><svg class="abs" style="left:15px;top:11px" width="25" height="23" viewBox="0 0 25 23"><defs><linearGradient id="bl" x1="0" y1="1" x2="0.6" y2="0"><stop offset="0.1" stop-color="#f7941d"/><stop offset="0.55" stop-color="#d43ad6"/><stop offset="1" stop-color="#b02ef2"/></linearGradient><linearGradient id="br" x1="0" y1="1" x2="1" y2="0"><stop offset="0.25" stop-color="#c12ef0"/><stop offset="0.9" stop-color="#3f9cf6"/></linearGradient></defs>
<g fill="url(#bl)"><circle cx="8" cy="4" r="3.3"/><circle cx="5" cy="7.6" r="3.3"/><circle cx="4" cy="11.5" r="3.2"/><circle cx="5.3" cy="15.3" r="3.3"/><circle cx="8.3" cy="18.3" r="3.2"/><rect x="7.5" y="0.7" width="3.7" height="20.8"/></g>
<g fill="url(#br)"><circle cx="17" cy="4" r="3.3"/><circle cx="20" cy="7.6" r="3.3"/><circle cx="21" cy="11.5" r="3.2"/><circle cx="19.7" cy="15.3" r="3.3"/><circle cx="16.7" cy="18.3" r="3.2"/><rect x="13.8" y="0.7" width="3.7" height="20.8"/></g>
<path d="M3.5 11.5H10M6 5.8Q7.5 3.8 10 3.6M6 17Q7.5 19 10 19.2M16.5 4V6.5L15 8M16.5 6.5L18.5 8M17.5 11H20.5L21.5 9.5M20.5 11L19 13M16.5 15V17.5L15 19M16.5 17.5L18 19" fill="none" stroke="#f7f0fb" stroke-width="0.9" stroke-linecap="round"/></svg></div>
<div id="scroll">
  <svg class="abs" style="left:3px;top:7px" width="9" height="5" viewBox="0 0 9 5"><path d="M0 5L4.5 0L9 5Z" fill="#8a8a8a"/></svg>
  <div class="abs" style="left:3px;top:18px;width:9px;height:624px;background:#8b8b8b;border-radius:4.5px"></div>
  <svg class="abs" style="left:3px;top:925.5px" width="9" height="5" viewBox="0 0 9 5"><path d="M0 0L4.5 5L9 0Z" fill="#8a8a8a"/></svg>
</div>
<div id="bottom"><div class="abs" style="left:196px;top:0;width:44px;height:8px;background:#f3eee7"></div><div class="abs" style="left:240px;top:0;width:1px;height:8px;background:#a89d90"></div><div class="abs" style="left:1915px;top:0;width:1px;height:8px;background:#6a6662"></div><div class="abs" style="left:1771px;top:5px;color:#111;font-size:12px;line-height:14px;white-space:nowrap">0:00</div></div>
</body></html>
